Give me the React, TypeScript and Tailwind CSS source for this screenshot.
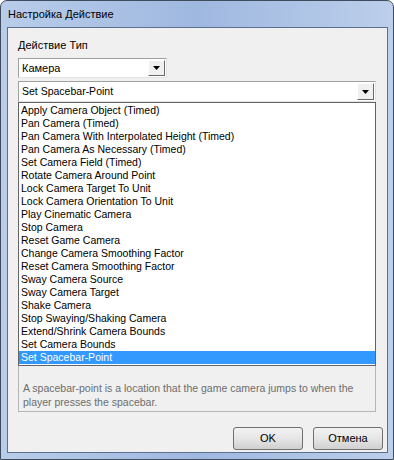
import React from 'react';

const ITEMS = [
  'Apply Camera Object (Timed)',
  'Pan Camera (Timed)',
  'Pan Camera With Interpolated Height (Timed)',
  'Pan Camera As Necessary (Timed)',
  'Set Camera Field (Timed)',
  'Rotate Camera Around Point',
  'Lock Camera Target To Unit',
  'Lock Camera Orientation To Unit',
  'Play Cinematic Camera',
  'Stop Camera',
  'Reset Game Camera',
  'Change Camera Smoothing Factor',
  'Reset Camera Smoothing Factor',
  'Sway Camera Source',
  'Sway Camera Target',
  'Shake Camera',
  'Stop Swaying/Shaking Camera',
  'Extend/Shrink Camera Bounds',
  'Set Camera Bounds',
  'Set Spacebar-Point',
];

function DropArrow() {
  return (
    <div className="w-[17px] h-full flex items-center justify-center bg-[#f0f0f0] border border-t-white border-l-white border-r-[#696969] border-b-[#696969]">
      <svg width="7" height="4" viewBox="0 0 7 4">
        <path d="M0 0h7L3.5 4z" fill="#000" />
      </svg>
    </div>
  );
}

function Combo({ value, className }: { value: string; className: string }) {
  return (
    <div
      className={`flex bg-white border border-t-[#a0a0a0] border-l-[#a0a0a0] border-r-[#e3e3e3] border-b-[#e3e3e3] p-[1px] ${className}`}
    >
      <div className="flex-1 flex items-center pl-[2px] text-black">{value}</div>
      <DropArrow />
    </div>
  );
}

function Button({ label }: { label: string }) {
  return (
    <button className="w-[70px] h-[23px] rounded-[3px] border border-[#707070] bg-gradient-to-b from-[#f2f2f2] via-[#e6e6e6] to-[#d0d0d0] text-black text-[11px] leading-none">
      {label}
    </button>
  );
}

export default function App() {
  return (
    <div
      className="w-[394px] h-[460px] flex flex-col rounded-t-[7px] border border-[#404c5e] bg-gradient-to-r from-[#b9cdea] via-[#9fb8e0] to-[#bccfeb] pl-[6px] pr-[5px] pb-[6px] text-[10.5px]"
      style={{ fontFamily: '"Liberation Sans", Arial, sans-serif' }}
    >
      {/* Title bar */}
      <div className="h-[26px] flex items-center pl-[1px] text-[11px] text-black">
        Настройка Действие
      </div>

      {/* Client area */}
      <div className="flex-1 flex flex-col border border-[#5b6f8e] bg-[#f0f0f0] pl-[10px] pr-[10px]">
        <div className="mt-[10px] h-[14px] leading-[14px] text-[11px] text-black">Действие Тип</div>

        <Combo value="Камера" className="mt-[6px] w-[149px] h-[20px] text-[11px]" />

        <div className="relative mt-[3px]">
          <Combo value="Set Spacebar-Point" className="w-[358px] h-[21px]" />

          {/* Dropped-down list */}
          <div className="absolute left-0 top-[21px] w-[358px] border border-[#646464] bg-white py-[1px] z-10">
            {ITEMS.map((item, i) => (
              <div
                key={item}
                className={[
                  'h-[13px] leading-[13px] pl-[2px] whitespace-nowrap',
                  i === ITEMS.length - 1 ? 'bg-[#3399ff] text-white' : 'text-black',
                ].join(' ')}
              >
                {item}
              </div>
            ))}
          </div>
        </div>

        {/* Description */}
        <div className="mt-[4px] w-[358px] h-[306px] flex items-end border border-[#b5b5b5] bg-[#f0f0f0] px-[4px] pb-[2px] text-[#6d6d6d] leading-[14px]">
          A spacebar-point is a location that the game camera jumps to when the player presses the spacebar.
        </div>

        <div className="mt-auto mb-[2px] -mr-[6px] flex justify-end gap-[10px]">
          <Button label="OK" />
          <Button label="Отмена" />
        </div>
      </div>
    </div>
  );
}
